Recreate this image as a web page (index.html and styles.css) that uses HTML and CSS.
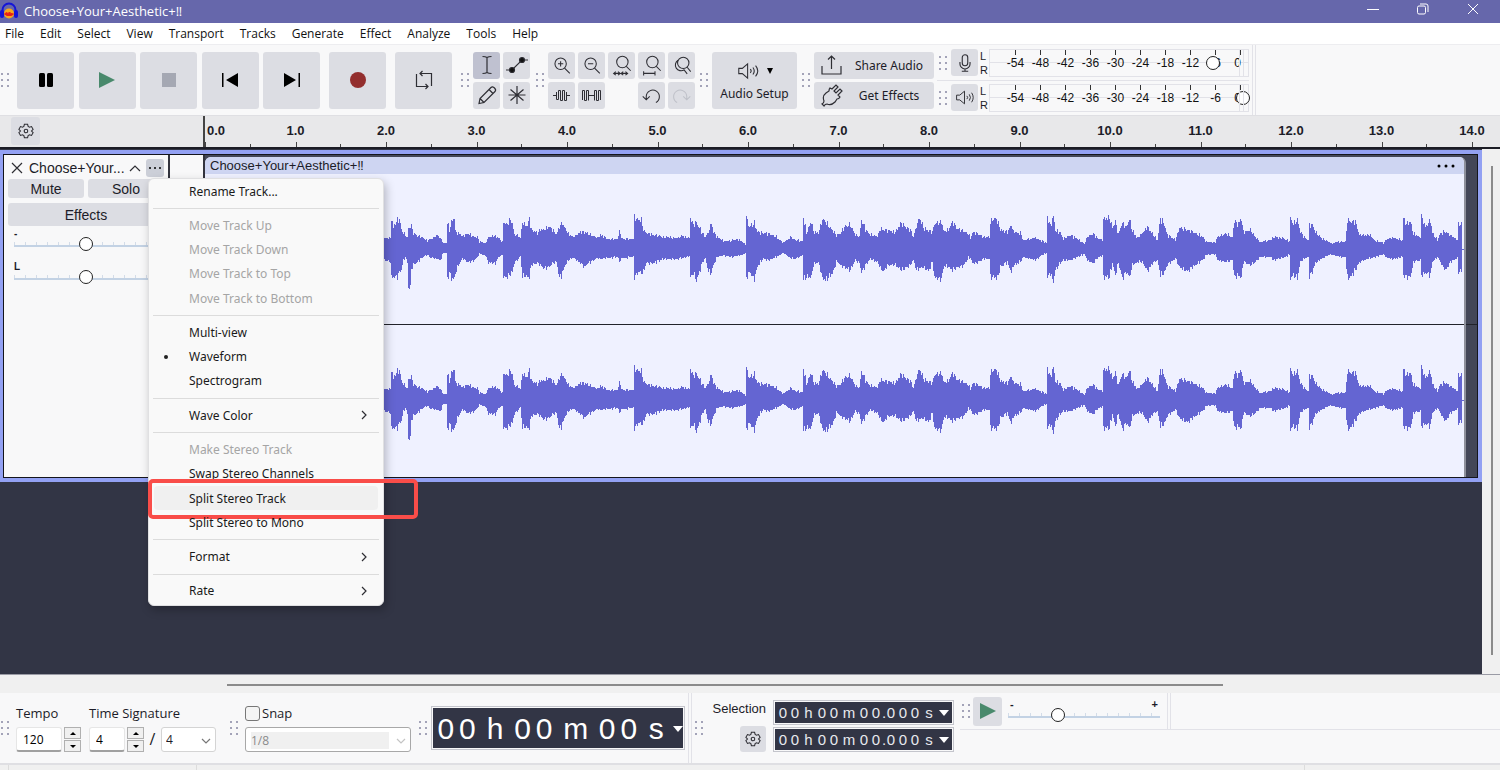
FILE: index.html
```html
<!DOCTYPE html>
<html lang="en">

<head>
    <meta charset="UTF-8">
    <title>Choose+Your+Aesthetic+‼</title>
    <link rel="stylesheet" href="styles.css">
</head>

<body>

    <header class="titlebar">
        <svg class="logo" width="18" height="18" viewBox="0 0 18 18">
            <path d="M2.500 11V8a6.500 6.500 0 0 1 13 0v3" fill="none" stroke="#1414d8" stroke-width="2" />
            <rect x="0" y="8" width="4" height="8" rx="2" fill="#1414d8" />
            <rect x="14" y="8" width="4" height="8" rx="2" fill="#1414d8" />
            <ellipse cx="9" cy="11.500" rx="5" ry="5" fill="#f7a81b" />
            <path d="M4.500 12l2-1.500 1.500 1 1.500-1.500 1.500 1.500 2.500.5-2 1.500H7z" fill="#e8201a" stroke="#e8201a" />
        </svg>
        <span class="title">Choose+Your+Aesthetic+‼</span>
        <div class="window-buttons">
            <button aria-label="Minimize"><svg width="12" height="12" viewBox="0 0 12 12"><path d="M0 6.500h12" /></svg></button>
            <button aria-label="Restore"><svg width="12" height="12" viewBox="0 0 12 12"><rect x="0.500" y="3" width="8" height="8" rx="1.500" /><path d="M3 1h6a2 2 0 0 1 2 2v6" /></svg></button>
            <button aria-label="Close"><svg width="12" height="12" viewBox="0 0 12 12"><path d="M1 1l10 10M11 1L1 11" /></svg></button>
        </div>
    </header>

    <nav class="menubar">
        <a href="#">File</a>
        <a href="#">Edit</a>
        <a href="#">Select</a>
        <a href="#">View</a>
        <a href="#">Transport</a>
        <a href="#">Tracks</a>
        <a href="#">Generate</a>
        <a href="#">Effect</a>
        <a href="#">Analyze</a>
        <a href="#">Tools</a>
        <a href="#">Help</a>
    </nav>

    <div class="toolbar">
        <span class="grip"></span>
        <div class="transport">
            <button class="big" aria-label="Pause"><svg width="24" height="24" viewBox="0 0 24 24"><rect x="5" y="5" width="6" height="14" rx="1.500" /><rect x="13" y="5" width="6" height="14" rx="1.500" /></svg></button>
            <button class="big" aria-label="Play"><svg width="24" height="24" viewBox="0 0 24 24"><path d="M4 4l16 8-16 8z" fill="#49896c" /></svg></button>
            <button class="big" aria-label="Stop"><svg width="24" height="24" viewBox="0 0 24 24"><rect x="5" y="5" width="14" height="14" fill="#a5a8b3" /></svg></button>
            <button class="big" aria-label="Skip to start"><svg width="24" height="24" viewBox="0 0 24 24"><path d="M4 5h1.500v14H4zM20 5v14L8 12z" /></svg></button>
            <button class="big" aria-label="Skip to end"><svg width="24" height="24" viewBox="0 0 24 24"><path d="M18.500 5H20v14h-1.500zM4 5v14l12-7z" /></svg></button>
        </div>
        <button class="big record" aria-label="Record"><svg width="24" height="24" viewBox="0 0 24 24"><circle cx="12" cy="12" r="8" fill="#932e2e" /></svg></button>
        <button class="big loop" aria-label="Loop"><svg class="line" width="24" height="24" viewBox="0 0 24 24"><path d="M8 18.500H4.500V6M16 5.500h3.500V18M8 5.500h8M10.500 3L8 5.500 10.500 8M8 18.500h8M13.500 16l2.500 2.500-2.500 2.500" /></svg></button>

        <span class="grip"></span>
        <div class="tools two">
            <button class="small active" aria-label="Selection tool"><svg class="line" width="24" height="24" viewBox="0 0 24 24"><path d="M7.500 3.500q3 0 4.500 1 1.500-1 4.500-1M7.500 20.500q3 0 4.500-1 1.500 1 4.500 1M12 4v16" /></svg></button>
            <button class="small" aria-label="Envelope tool"><svg class="line" width="24" height="24" viewBox="0 0 24 24"><path d="M1 17h6L17 7h6" /><circle cx="7" cy="17" r="2.500" fill="#111" /><circle cx="17" cy="7" r="2.500" fill="#111" /></svg></button>
            <button class="small" aria-label="Draw tool"><svg class="line" width="24" height="24" viewBox="0 0 24 24"><path d="M4 20.500l1-5L16 4.500q1.500-1.500 3.500.5t.5 3.500L9 19.500zM5 15.500l4 4M14 6.500l4 4" /></svg></button>
            <button class="small" aria-label="Multi tool"><svg class="line" width="24" height="24" viewBox="0 0 24 24"><path d="M12 3v18M3.500 12h17M5.500 6.500l13 11M18.500 6.500l-13 11" /></svg></button>
        </div>

        <span class="grip"></span>
        <div class="tools five">
            <button class="small" aria-label="Zoom in"><svg class="line" width="21" height="21" viewBox="0 0 24 24"><circle cx="11" cy="10" r="6.500" /><path d="M15.500 15l6 6M8 10h6M11 7v6" /></svg></button>
            <button class="small" aria-label="Zoom out"><svg class="line" width="21" height="21" viewBox="0 0 24 24"><circle cx="11" cy="10" r="6.500" /><path d="M15.500 15l6 6M8 10h6" /></svg></button>
            <button class="small" aria-label="Fit selection"><svg class="line" width="21" height="21" viewBox="0 0 24 24"><circle cx="13" cy="8" r="6.500" /><path d="M17.500 13l5 5M3 21h7M12 21h7M5.500 19L3 21l2.500 2M8 19l2.500 2L8 23M14 19l-2.500 2 2.500 2M16.500 19l2.500 2-2.500 2" /></svg></button>
            <button class="small" aria-label="Fit project"><svg class="line" width="21" height="21" viewBox="0 0 24 24"><circle cx="13" cy="8" r="6.500" /><path d="M17.500 13l5 5M3 21h13M3 18.500v5M16 18.500v5" /></svg></button>
            <button class="small" aria-label="Zoom toggle"><svg class="line" width="21" height="21" viewBox="0 0 24 24"><circle cx="14" cy="9" r="6.500" /><path d="M18.500 14l4 5M8 6a6 6 0 1 0 7 11M14.500 16.500l4 5" /></svg></button>
            <button class="small" aria-label="Trim audio"><svg class="fine" width="21" height="21" viewBox="0 0 21 21"><path d="M2 10.500h3.500M5.500 7v7.500h2v-9h2v10h2v-10h2v10h2V7M15.500 10.500H19" /></svg></button>
            <button class="small" aria-label="Silence audio"><svg class="fine" width="21" height="21" viewBox="0 0 21 21"><path d="M1.500 15V5.500h2v10h2v-10h2v10M7.500 10.500h6M13.500 15.500v-10h2v10h2v-10h2V15" /></svg></button>
            <span></span>
            <button class="small" aria-label="Undo"><svg class="line" width="21" height="21" viewBox="0 0 24 24"><path d="M6 16v-3a7.500 7.500 0 1 1 11 7M2 13l4 4 4-4" /></svg></button>
            <button class="small" aria-label="Redo" disabled><svg class="line faded" width="21" height="21" viewBox="0 0 24 24"><path d="M18 16v-3a7.500 7.500 0 1 0-11 7M22 13l-4 4-4-4" /></svg></button>
        </div>

        <span class="grip"></span>
        <button class="audio-setup">
            <span class="audio-icons">
                <svg class="line" width="23" height="18" viewBox="0 0 26 20"><path d="M2 7h4l6-5v16l-6-5H2zM15 8q2 2 0 4M18 6q3 4 0 8M21 4q5 6 0 12" /></svg>
                <svg width="6" height="6" viewBox="0 0 6 6"><path d="M0 0h6L3 6z" /></svg>
            </span>
            Audio Setup
        </button>

        <span class="grip"></span>
        <div class="share">
            <button><svg class="line" width="24" height="24" viewBox="0 0 24 24"><path d="M2 13v8h19v-8M11.500 16V3M8 6.500L11.500 3 15 6.500" /></svg><span>Share Audio</span></button>
            <button><svg class="line" width="24" height="24" viewBox="0 0 24 24"><path d="M2 21q2-1 2-3-2-5 2-8l3-2q0-2 1-3l2 1 4-4 2 2-4 4 2 2 4-4 2 2-4 4 2 2q-1 2-3 2l-2 3q-4 4-8 2-2 0-3 2z" /></svg><span>Get Effects</span></button>
        </div>

        <div class="meters">
            <div class="meter-row">
                <span class="grip"></span>
                <button class="small" aria-label="Record meter"><svg class="line" width="22" height="22" viewBox="0 0 24 24"><rect x="9" y="3" width="6" height="12" rx="3" /><path d="M6.500 11v2a5.500 5.500 0 0 0 11 0v-2M12 18v3M8.500 21h7" /></svg></button>
                <div class="channels"><span>L</span><span>R</span></div>
                <div class="meter">
                    <div class="scale"><span>-54</span><span>-48</span><span>-42</span><span>-36</span><span>-30</span><span>-24</span><span>-18</span><span>-12</span><span>-6</span><span>0</span></div>
                    <input class="level" type="range" min="0" max="100" value="88" aria-label="Recording level">
                </div>
            </div>
            <div class="meter-row">
                <span class="grip"></span>
                <button class="small" aria-label="Playback meter"><svg class="line" width="21" height="19" viewBox="0 0 26 24"><path d="M3 9h4l6-5v16l-6-5H3zM16 10q2 2 0 4M19 8q3 4 0 8M22 6q4 6 0 12" /></svg></button>
                <div class="channels"><span>L</span><span>R</span></div>
                <div class="meter">
                    <div class="scale"><span>-54</span><span>-48</span><span>-42</span><span>-36</span><span>-30</span><span>-24</span><span>-18</span><span>-12</span><span>-6</span><span>0</span></div>
                    <input class="level" type="range" min="0" max="100" value="100" aria-label="Playback level">
                </div>
            </div>
        </div>
        <span class="divider"></span>
    </div>

    <div class="ruler">
        <div class="ruler-left">
            <button class="gear" aria-label="Timeline options"><svg class="line" width="16" height="16" viewBox="0 0 18 18"><path d="M7.200 1.500h3.600l.6 2.400 1.500.8 2.300-.7 1.800 3.100L15.200 9l1.800 1.900-1.800 3.100-2.300-.7-1.500.8-.6 2.400H7.200l-.6-2.400-1.500-.8-2.300.7L1 10.900 2.800 9 1 7.100 2.800 4l2.300.7 1.500-.8z" /><circle cx="9" cy="9" r="2" /></svg></button>
        </div>
        <div class="ticks">
            <span class="tick first"><b>0.0</b></span>
            <span class="tick"><b>1.0</b></span>
            <span class="tick"><b>2.0</b></span>
            <span class="tick"><b>3.0</b></span>
            <span class="tick"><b>4.0</b></span>
            <span class="tick"><b>5.0</b></span>
            <span class="tick"><b>6.0</b></span>
            <span class="tick"><b>7.0</b></span>
            <span class="tick"><b>8.0</b></span>
            <span class="tick"><b>9.0</b></span>
            <span class="tick"><b>10.0</b></span>
            <span class="tick"><b>11.0</b></span>
            <span class="tick"><b>12.0</b></span>
            <span class="tick"><b>13.0</b></span>
            <span class="tick last"><b>14.0</b></span>
        </div>
    </div>

    <main class="workspace">
        <div class="tracks">
            <section class="track">
                <div class="track-inner">
                    <div class="panel">
                        <div class="panel-head">
                            <button class="plain" aria-label="Close track"><svg class="line" width="12" height="12" viewBox="0 0 12 12"><path d="M1 1l10 10M11 1L1 11" /></svg></button>
                            <span class="track-name">Choose+Your...</span>
                            <button class="plain" aria-label="Collapse"><svg class="line" width="12" height="12" viewBox="0 0 12 12"><path d="M1 9l5-5 5 5" /></svg></button>
                            <button class="more" aria-label="Track menu"><svg width="14" height="4" viewBox="0 0 14 4"><circle cx="2" cy="2" r="1" /><circle cx="7" cy="2" r="1" /><circle cx="12" cy="2" r="1" /></svg></button>
                        </div>
                        <div class="mute-solo">
                            <button>Mute</button>
                            <button>Solo</button>
                        </div>
                        <button class="effects">Effects</button>
                        <div class="knob">
                            <label for="gain">-</label>
                            <input class="slider" id="gain" type="range" value="50">
                        </div>
                        <div class="knob">
                            <label for="pan">L</label>
                            <input class="slider" id="pan" type="range" value="50">
                        </div>

                        <ul class="menu">
                            <li><button>Rename Track...</button></li>
                            <li class="sep"></li>
                            <li><button disabled>Move Track Up</button></li>
                            <li><button disabled>Move Track Down</button></li>
                            <li><button disabled>Move Track to Top</button></li>
                            <li><button disabled>Move Track to Bottom</button></li>
                            <li class="sep"></li>
                            <li><button>Multi-view</button></li>
                            <li class="checked"><button>Waveform</button></li>
                            <li><button>Spectrogram</button></li>
                            <li class="sep"></li>
                            <li><button>Wave Color <svg class="line" width="8" height="10" viewBox="0 0 8 10"><path d="M2 1l4 4-4 4" /></svg></button></li>
                            <li class="sep"></li>
                            <li><button disabled>Make Stereo Track</button></li>
                            <li><button>Swap Stereo Channels</button></li>
                            <li class="hover"><button>Split Stereo Track</button><span class="marker"></span></li>
                            <li><button>Split Stereo to Mono</button></li>
                            <li class="sep"></li>
                            <li><button>Format <svg class="line" width="8" height="10" viewBox="0 0 8 10"><path d="M2 1l4 4-4 4" /></svg></button></li>
                            <li class="sep"></li>
                            <li><button>Rate <svg class="line" width="8" height="10" viewBox="0 0 8 10"><path d="M2 1l4 4-4 4" /></svg></button></li>
                        </ul>
                    </div>
                    <div class="vruler"></div>
                    <div class="clip-area">
                        <div class="clip">
                            <div class="clip-head">
                                <span>Choose+Your+Aesthetic+‼</span>
                                <svg width="18" height="4" viewBox="0 0 18 4"><circle cx="2" cy="2" r="1.500" /><circle cx="9" cy="2" r="1.500" /><circle cx="16" cy="2" r="1.500" /></svg>
                            </div>
                            <div class="channel"><svg class="wave" viewBox="0 0 1259 150" preserveAspectRatio="none"></svg></div>
                            <div class="channel"><svg class="wave" viewBox="0 0 1259 150" preserveAspectRatio="none"></svg></div>
                        </div>
                    </div>
                </div>
            </section>
        </div>
        <div class="vscroll"><span></span></div>
    </main>
    <div class="hscroll"><span></span></div>

    <footer class="bottombar">
        <span class="grip"></span>
        <div class="field tempo">
            <label for="tempo">Tempo</label>
            <div class="field-row">
                <input id="tempo" type="text" value="120">
                <div class="spin"><button aria-label="Tempo up"><svg width="6" height="3" viewBox="0 0 6 3"><path d="M0 3l3-3 3 3z" /></svg></button><button aria-label="Tempo down"><svg width="6" height="3" viewBox="0 0 6 3"><path d="M0 0l3 3 3-3z" /></svg></button></div>
            </div>
        </div>
        <div class="field signature">
            <label for="upper">Time Signature</label>
            <div class="field-row">
                <input id="upper" type="text" value="4">
                <div class="spin"><button aria-label="Beats up"><svg width="6" height="3" viewBox="0 0 6 3"><path d="M0 3l3-3 3 3z" /></svg></button><button aria-label="Beats down"><svg width="6" height="3" viewBox="0 0 6 3"><path d="M0 0l3 3 3-3z" /></svg></button></div>
                <span class="slash">/</span>
                <div class="select">
                    <select aria-label="Lower time signature"><option>4</option></select>
                    <svg class="line" width="10" height="6" viewBox="0 0 10 6"><path d="M1 1l4 4 4-4" /></svg>
                </div>
            </div>
        </div>

        <span class="grip"></span>
        <div class="field snap">
            <label><input type="checkbox">Snap</label>
            <div class="select off">
                <select aria-label="Snap to" disabled><option>1/8</option></select>
                <svg class="line" width="10" height="6" viewBox="0 0 10 6"><path d="M1 1l4 4 4-4" /></svg>
            </div>
        </div>

        <span class="grip"></span>
        <div class="time large">
            <i>0</i><i>0</i><i class="h">h</i><i>0</i><i>0</i><i class="m">m</i><i>0</i><i>0</i><i class="s">s</i>
            <button aria-label="Time format"><svg width="10" height="6" viewBox="0 0 10 6"><path d="M0 0h10L5 6z" /></svg></button>
        </div>
        <span class="divider"></span>

        <span class="grip"></span>
        <div class="selection">
            <span>Selection</span>
            <button class="gear" aria-label="Selection options"><svg class="line" width="16" height="16" viewBox="0 0 18 18"><path d="M7.200 1.500h3.600l.6 2.400 1.500.8 2.300-.7 1.800 3.100L15.200 9l1.800 1.900-1.800 3.100-2.300-.7-1.500.8-.6 2.400H7.200l-.6-2.400-1.500-.8-2.300.7L1 10.900 2.800 9 1 7.100 2.800 4l2.300.7 1.500-.8z" /><circle cx="9" cy="9" r="2" /></svg></button>
        </div>
        <div class="times">
            <div class="time">
                <i>0</i><i>0</i><i class="h">h</i><i>0</i><i>0</i><i class="m">m</i><i>0</i><i>0</i><i class="dot">.</i><i>0</i><i>0</i><i>0</i><i class="s">s</i>
                <button aria-label="Start format"><svg width="10" height="6" viewBox="0 0 10 6"><path d="M0 0h10L5 6z" /></svg></button>
            </div>
            <div class="time">
                <i>0</i><i>0</i><i class="h">h</i><i>0</i><i>0</i><i class="m">m</i><i>0</i><i>0</i><i class="dot">.</i><i>0</i><i>0</i><i>0</i><i class="s">s</i>
                <button aria-label="End format"><svg width="10" height="6" viewBox="0 0 10 6"><path d="M0 0h10L5 6z" /></svg></button>
            </div>
        </div>

        <div class="speed">
            <span class="grip"></span>
            <button class="speed-play" aria-label="Play at speed"><svg width="24" height="24" viewBox="0 0 24 24"><path d="M4 4l16 8-16 8z" fill="#49896c" /></svg></button>
            <div class="speed-slider">
                <div class="ends"><span>-</span><span>+</span></div>
                <input class="slider" type="range" min="0" max="100" value="31" aria-label="Playback speed">
            </div>
            <span class="divider"></span>
        </div>
    </footer>
    <div class="statusbar"><span></span><span></span><span></span></div>

    <script src="script.js"></script>
</body>

</html>
```

FILE: styles.css
```css
* {
    box-sizing: border-box;
}

body {
    margin: 0;
    height: 100vh;
    display: flex;
    flex-direction: column;
    overflow: hidden;
    background: #f8f8f9;
    color: #1c1c28;
    font-family: "Open Sans", "Noto Sans", sans-serif;
    font-size: 12px;
}

button {
    display: flex;
    align-items: center;
    justify-content: center;
    padding: 0;
    border: none;
    border-radius: 3px;
    background: #dcdde3;
    color: inherit;
    font: inherit;
}

svg {
    flex: none;
}

.line,
.fine {
    fill: none;
    stroke: #2e2e34;
    stroke-width: 1.2px;
}

.fine {
    stroke-width: 1px;
}

.faded {
    stroke: #bfc1c9;
}

/* title and menu */
.titlebar {
    flex: none;
    display: flex;
    align-items: center;
    height: 23px;
    padding-bottom: 2px;
    background: #6667ab;
    color: #fff;
}

.title {
    flex: 1;
    margin-left: 6px;
    font-size: 13px;
}

.window-buttons {
    display: flex;
    align-self: flex-start;
    margin-right: 2px;
}

.window-buttons button {
    width: 50px;
    height: 18px;
    background: none;
}

.window-buttons svg {
    fill: none;
    stroke: #fff;
}

.menubar {
    flex: none;
    display: flex;
    align-items: center;
    gap: 16px;
    height: 21px;
    padding-left: 5px;
    background: #fff;
}

.menubar a {
    color: #111;
    text-decoration: none;
}

/* top toolbar */
.toolbar {
    flex: none;
    display: flex;
    align-items: center;
    height: 72px;
    border-top: 1px solid #ededf0;
    border-bottom: 1px solid #dfdfe3;
}

.grip {
    flex: none;
    width: 8px;
    height: 14px;
    margin: 0 4px 0 5px;
    background: conic-gradient(#a3a3b8 0 0) 0 0 / 2px 2px no-repeat,
        conic-gradient(#a3a3b8 0 0) 100% 0 / 2px 2px no-repeat,
        conic-gradient(#a3a3b8 0 0) 0 50% / 2px 2px no-repeat,
        conic-gradient(#a3a3b8 0 0) 100% 50% / 2px 2px no-repeat,
        conic-gradient(#a3a3b8 0 0) 0 100% / 2px 2px no-repeat,
        conic-gradient(#a3a3b8 0 0) 100% 100% / 2px 2px no-repeat;
}

.toolbar > .grip:first-child,
.bottombar > .grip:first-child {
    margin-left: 1px;
    margin-right: 7px;
}

.toolbar > .grip:first-child {
    margin-right: 8px;
}

.transport {
    display: flex;
    justify-content: space-between;
    width: 303px;
}

.big {
    width: 57px;
    height: 57px;
}

.record {
    margin-left: 9px;
}

.loop {
    margin: 0 4px 0 9px;
}

.tools {
    display: grid;
    gap: 3px;
}

.two {
    grid-template-columns: repeat(2, 27px);
    margin-right: 1px;
}

.five {
    grid-template-columns: repeat(5, 27px);
}

.small {
    width: 27px;
    height: 27px;
}

.active {
    background: #bfc1d0;
}

.audio-setup {
    flex-direction: column;
    gap: 5px;
    width: 85px;
    height: 57px;
    padding-top: 3px;
    font-family: "Noto Sans", sans-serif;
}

.audio-icons {
    display: flex;
    align-items: center;
    gap: 7px;
}

.share {
    display: grid;
    gap: 3px;
    font-family: "Noto Sans", sans-serif;
}

.share button {
    justify-content: flex-start;
    width: 120px;
    height: 27px;
    padding-left: 6px;
}

.share span {
    flex: 1;
    text-align: center;
}

.meters {
    align-self: stretch;
    margin-left: 3px;
}

.meter-row {
    display: flex;
    align-items: center;
    height: 33px;
}

.meter-row:first-child {
    height: 36px;
    border-bottom: 1px solid #e2e2e8;
}

.meter-row .grip {
    margin-left: 2px;
}

.channels {
    display: flex;
    flex-direction: column;
    width: 9px;
    margin-left: 2px;
    font: 11px/14px "Liberation Sans", sans-serif;
}

.meter {
    position: relative;
    width: 260px;
    height: 28px;
    border: 1px solid #e2e2e8;
    background: linear-gradient(#e2e2e8, #e2e2e8) 100% 50% / 100% 1px no-repeat;
}

.meter::after {
    content: "";
    position: absolute;
    top: 0;
    bottom: 0;
    right: 4px;
    width: 3px;
    border: 1px solid #e2e2e8;
    border-width: 0 1px;
}

.scale {
    display: grid;
    grid-template-columns: repeat(10, 25px);
    padding-left: 13px;
    font: 12px/26px "Liberation Sans", sans-serif;
    text-align: center;
    color: #111;
}

.scale span {
    background: linear-gradient(#333, #333) 50% 0 / 1px 5px no-repeat;
}

.scale span:last-child {
    padding-right: 6px;
}

.level {
    position: absolute;
    left: 0;
    top: 0;
    width: 260px;
    height: 26px;
    margin: 0;
    appearance: none;
    background: none;
}

.level::-webkit-slider-thumb,
.slider::-webkit-slider-thumb {
    appearance: none;
    width: 14px;
    height: 14px;
    border: 1px solid #222;
    border-radius: 50%;
    background: #fff;
}

.divider {
    align-self: stretch;
    width: 4px;
    margin-left: 3px;
    border: 1px solid #e2e2e8;
    border-width: 0 1px;
}

/* timeline */
.ruler {
    flex: none;
    display: flex;
    height: 33px;
    background: #e8e8ea;
    border-bottom: 2px solid #1b1c25;
}

.ruler-left {
    width: 205px;
    padding: 1px 0 0 11px;
    border-right: 2px solid #444;
}

.gear {
    width: 29px;
    height: 28px;
}

.ticks {
    flex: 1;
    display: grid;
    grid-template-columns: repeat(14, 1fr) 28px;
    overflow: hidden;
}

.tick {
    background: linear-gradient(#444, #444) 0 100% / 1px 5px no-repeat,
        linear-gradient(#444, #444) 50% 100% / 1px 3px no-repeat;
}

.last {
    background: linear-gradient(#444, #444) 0 100% / 1px 5px no-repeat;
}

.tick b {
    display: block;
    width: 40px;
    margin-left: -20px;
    text-align: center;
    font: bold 13px/29px "Liberation Sans", sans-serif;
}

.first b {
    margin-left: 2px;
    text-align: left;
}

/* tracks */
.workspace {
    flex: 1;
    display: flex;
    min-height: 0;
}

.tracks {
    flex: 1;
    padding-top: 1px;
    background: #323545;
}

.track {
    border: 4px solid #93a1f3;
    border-left-width: 3px;
}

.track-inner {
    display: flex;
    border: 1px solid #14151c;
    background: #f8f8f9;
    font-family: "Liberation Sans", sans-serif;
}

.panel {
    position: relative;
    width: 164px;
    padding: 4px 4px 0;
    font-size: 14px;
}

.panel-head {
    display: flex;
    align-items: center;
    height: 18px;
    padding-left: 3px;
}

.plain {
    width: 12px;
    background: none;
}

.track-name {
    flex: 1;
    margin-left: 6px;
}

.more {
    width: 18px;
    height: 18px;
    margin-left: 5px;
    background: #cccfd8;
}

.mute-solo {
    display: flex;
    gap: 4px;
    margin: 2px 0 5px;
}

.mute-solo button {
    flex: 1;
    height: 19px;
}

.effects {
    width: 100%;
    height: 23px;
}

.knob {
    height: 33px;
    padding: 4px 7px 0 6px;
}

.knob label {
    display: block;
    height: 7px;
    font: bold 10px/7px "Liberation Sans", sans-serif;
}

.slider {
    display: block;
    width: 100%;
    height: 14px;
    margin: 0;
    appearance: none;
    background: linear-gradient(#c3d2e4, #c3d2e4) 0 8px / 100% 2px no-repeat,
        repeating-linear-gradient(90deg, #d3dce8 0 1px, transparent 1px 11px) 0 5px / 100% 4px no-repeat;
}

.vruler {
    width: 37px;
    border: 2px solid #33343e;
    border-width: 0 2px;
}

.clip-area {
    flex: 1;
    padding: 2px 11px 0 0;
    background: linear-gradient(#22232b, #22232b) 0 169px / 100% 1px no-repeat #434657;
}

.clip {
    border-right: 2px solid #8e909b;
    border-radius: 6px 6px 0 0;
    background: #eff1ff;
    overflow: hidden;
}

.clip-head {
    display: flex;
    align-items: center;
    justify-content: space-between;
    height: 17px;
    padding: 0 9px 0 5px;
    background: #ced5f2;
    font-size: 13px;
}

.channel {
    height: 151px;
    border-bottom: 1px solid #22232b;
}

.channel:last-child {
    height: 152px;
    border: none;
}

.wave {
    display: block;
    width: 100%;
    height: 150px;
}

.wave path {
    fill: #6465d2;
}

/* track drop-down */
.menu {
    position: absolute;
    z-index: 5;
    left: 144px;
    top: 23px;
    display: flex;
    flex-direction: column;
    width: 236px;
    height: 428px;
    margin: 0;
    padding: 0 0 2px;
    border: 1px solid #e0e0e2;
    border-radius: 6px;
    background: #f9f9f9;
    box-shadow: 2px 4px 10px rgba(0, 0, 0, 0.25);
    list-style: none;
    font-family: "Noto Sans", sans-serif;
    font-size: 12px;
    color: #1a1a1a;
}

.menu li {
    position: relative;
    flex: 1;
    margin: 0 5px;
}

.menu li button {
    justify-content: space-between;
    width: 100%;
    height: 100%;
    padding: 0 10px 0 35px;
    background: none;
}

.menu button:disabled {
    color: #a5a5a5;
}

.menu .sep {
    flex: none;
    height: 1px;
    margin: 5px 4px 4px;
    background: #dcdcdc;
}

.menu .hover button {
    border-radius: 4px;
    background: #f0f0f0;
}

.menu .checked::before {
    content: "";
    position: absolute;
    left: 10px;
    top: 10px;
    width: 4px;
    height: 4px;
    border-radius: 50%;
    background: #222;
}

.marker {
    position: absolute;
    left: -6px;
    top: -7px;
    width: 270px;
    height: 40px;
    border: 4px solid #f94d49;
    border-radius: 5px;
}

/* scrollbars */
.vscroll {
    width: 18px;
    padding: 17px 0 19px 9px;
    background: #f0f0f0;
}

.vscroll span {
    display: block;
    width: 2px;
    height: 100%;
    background: #8b8b8b;
}

.hscroll {
    flex: none;
    height: 19px;
    padding: 9px 277px 0 227px;
    background: #f0f0f0;
    border-top: 1px solid #9a9ba5;
}

.hscroll span {
    display: block;
    height: 2px;
    background: #8b8b8b;
}

/* bottom toolbar */
.bottombar {
    flex: none;
    display: flex;
    align-items: center;
    height: 72px;
    border-bottom: 2px solid #dfdfe3;
    font-size: 13px;
}

.field {
    display: flex;
    flex-direction: column;
    gap: 5px;
}

.field label {
    display: flex;
    align-items: center;
    height: 18px;
}

.field-row {
    display: flex;
}

.field input[type="text"] {
    width: 46px;
    height: 25px;
    padding: 0 6px;
    border: 1px solid #e6e6e6;
    border-bottom: 2px solid #a0a0a0;
    border-radius: 3px;
    font: 12px "Open Sans", sans-serif;
}

.signature {
    margin-left: 8px;
}

.signature input[type="text"] {
    width: 36px;
}

.spin {
    display: flex;
    flex-direction: column;
    gap: 1px;
    margin-left: 2px;
}

.spin button {
    width: 17px;
    height: 12px;
    border: 1px solid #b0b0b0;
    border-radius: 0;
    background: #f0f0f0;
}

.slash {
    width: 17px;
    text-align: center;
    font-size: 16px;
    line-height: 24px;
}

.select {
    position: relative;
    width: 55px;
    height: 25px;
    border: 1px solid #d4d4d4;
    border-radius: 3px;
    background: #fff;
}

.select select {
    width: 100%;
    height: 100%;
    padding: 0 4px;
    border: none;
    appearance: none;
    background: none;
    font: 12px "Open Sans", sans-serif;
    color: #1c1c28;
}

.select svg {
    position: absolute;
    right: 4px;
    top: 10px;
    pointer-events: none;
    stroke: #777;
}

.field + .grip {
    margin-left: 14px;
    margin-right: 7px;
}

.snap label {
    gap: 2px;
}

.snap input {
    appearance: none;
    width: 15px;
    height: 15px;
    margin: 0;
    border: 1px solid #777;
    border-radius: 3px;
    background: #f4f4f4;
}

.select.off {
    width: 166px;
    border: 1px solid #a8a8a8;
    padding: 3px 21px 3px 5px;
}

.select.off select {
    padding: 0;
    background: #f0f0f0;
    color: #8b8b8b;
    opacity: 1;
}

.select.off svg {
    stroke: #c4c4c4;
}

.snap + .grip {
    margin-left: 8px;
    margin-right: 4px;
}

.time {
    display: flex;
    align-items: center;
    width: 181px;
    height: 25px;
    padding-left: 2px;
    border: 2px solid #c4c5cc;
    outline: 1px solid #f8f8f9;
    outline-offset: -2px;
    background: #323545;
    color: #e8e9ee;
    font: 15px "Liberation Sans", sans-serif;
}

.time i {
    width: 12px;
    text-align: center;
    font-style: normal;
}

.time .h {
    width: 15px;
}

.time .m {
    width: 18px;
}

.time .s {
    width: 16px;
}

.time .dot {
    width: 3px;
}

.time button {
    margin-left: 2px;
    background: none;
    fill: #fff;
}

.large {
    width: 254px;
    height: 44px;
    padding-top: 2px;
    overflow: hidden;
    color: #fff;
    font-size: 30px;
}

.large i {
    width: 22px;
}

.large .h,
.large .s {
    width: 34px;
}

.large .m {
    width: 42px;
}

.large button {
    margin-left: 0;
}

.bottombar > .divider + .grip {
    margin-left: 3px;
    margin-right: 7px;
}

.selection {
    display: flex;
    flex-direction: column;
    align-items: flex-end;
    gap: 10px;
    width: 56px;
    margin-bottom: 4px;
    font-family: "Liberation Sans", sans-serif;
}

.selection .gear {
    width: 26px;
    height: 26px;
}

.times {
    display: grid;
    gap: 2px;
    margin: 0 0 4px 7px;
}

.speed {
    flex: 1;
    align-self: flex-start;
    display: flex;
    align-items: center;
    height: 37px;
    margin-left: 6px;
    border-bottom: 1px solid #e2e2e8;
}

.speed .grip {
    margin: 0 3px 0 2px;
}

.speed-play {
    width: 29px;
    height: 29px;
}

.speed-slider {
    width: 152px;
    margin: 0 4px 0 6px;
}

.ends {
    display: flex;
    justify-content: space-between;
    padding: 0 2px;
    font: bold 11px/8px "Liberation Sans", sans-serif;
}

.statusbar {
    flex: none;
    display: flex;
    height: 5px;
    background: #f0f0f0;
}

.statusbar span {
    width: 9px;
    border-right: 1px solid #dcdcdc;
}

.statusbar span:nth-child(2) {
    width: 188px;
}

.statusbar span:nth-child(3) {
    flex: 1;
    margin-right: 195px;
}
```

FILE: script.js
```javascript
// peaks of the clip: x, height above and depth below the centre line
const peaks = [
    [384, 11, 11], [390, 11, 13], [391, 31, 29], [393, 21, 27], [394, 24, 28], [397, 29, 28], [399, 29, 23],
    [401, 20, 21], [403, 16, 11], [405, 14, 8], [407, 11, 13], [408, 21, 39], [409, 21, 39], [410, 23, 39], [411, 23, 20],
    [413, 16, 16], [417, 13, 13], [422, 12, 8], [427, 8, 6], [430, 10, 9], [433, 11, 9], [437, 14, 10],
    [440, 11, 11], [443, 6, 4], [446, 6, 4], [447, 26, 30], [449, 19, 23], [451, 27, 29], [454, 32, 30],
    [455, 17, 24], [458, 16, 16], [462, 13, 9], [467, 15, 13], [473, 12, 12], [477, 12, 8], [479, 7, 5],
    [485, 6, 6], [488, 12, 14], [495, 13, 14], [498, 11, 8], [502, 7, 6], [503, 27, 28], [507, 24, 28],
    [509, 29, 26], [512, 26, 23], [514, 14, 14], [517, 14, 11], [520, 11, 7], [522, 27, 28], [524, 24, 26],
    [527, 23, 28], [529, 31, 28], [531, 19, 16], [537, 16, 14], [540, 20, 16], [543, 19, 19], [549, 22, 18],
    [552, 19, 14], [556, 15, 13], [559, 22, 29], [562, 26, 24], [564, 22, 18], [568, 15, 11], [573, 12, 9],
    [580, 17, 14], [584, 17, 18], [588, 15, 14], [593, 13, 11], [597, 11, 9], [600, 14, 10], [607, 10, 9],
    [617, 10, 8], [619, 17, 12], [622, 10, 9], [633, 10, 8], [634, 31, 28], [638, 29, 23], [641, 29, 24],
    [643, 19, 23], [646, 16, 14], [653, 14, 14], [663, 12, 10], [677, 11, 10], [682, 13, 9], [689, 11, 7],
    [690, 31, 29], [693, 24, 24], [696, 27, 31], [698, 23, 26], [702, 16, 14], [705, 12, 9], [708, 17, 23],
    [711, 26, 24], [713, 17, 16], [717, 12, 8], [723, 8, 6], [730, 8, 8], [737, 10, 7], [742, 7, 6],
    [745, 5, 4], [746, 31, 29], [749, 22, 23], [754, 26, 30], [757, 17, 18], [762, 16, 10], [770, 15, 11],
    [777, 11, 7], [783, 6, 4], [790, 12, 9], [795, 9, 10], [802, 8, 6], [803, 32, 30], [806, 16, 28],
    [811, 28, 28], [813, 17, 16], [818, 16, 13], [822, 29, 29], [825, 28, 31], [828, 23, 28], [833, 18, 23],
    [836, 13, 12], [840, 16, 16], [845, 23, 19], [850, 24, 21], [855, 14, 11], [859, 12, 14], [861, 29, 24],
    [865, 19, 16], [870, 14, 10], [877, 13, 13], [880, 20, 19], [883, 19, 22], [888, 18, 16], [895, 17, 16],
    [901, 26, 21], [905, 22, 19], [910, 19, 16], [913, 12, 11], [916, 23, 21], [919, 31, 19], [923, 21, 18],
    [928, 18, 22], [932, 17, 13], [934, 25, 29], [941, 27, 30], [944, 17, 16], [948, 19, 18], [952, 27, 21],
    [957, 20, 18], [963, 18, 17], [968, 15, 8], [970, 10, 9], [972, 16, 14], [977, 16, 14], [982, 12, 10],
    [989, 12, 10], [990, 27, 28], [994, 31, 28], [997, 28, 29], [1000, 19, 18], [1007, 17, 13], [1011, 24, 24],
    [1013, 17, 16], [1020, 16, 13], [1023, 9, 8], [1035, 11, 11], [1042, 8, 6], [1046, 6, 4], [1047, 32, 28],
    [1050, 23, 24], [1053, 33, 33], [1055, 19, 21], [1060, 16, 14], [1063, 10, 11], [1070, 14, 11], [1077, 10, 8],
    [1084, 5, 5], [1087, 12, 11], [1093, 15, 14], [1098, 10, 8], [1102, 9, 6], [1103, 30, 28], [1109, 31, 28],
    [1112, 21, 14], [1115, 27, 26], [1118, 15, 14], [1122, 26, 29], [1126, 22, 23], [1129, 30, 28], [1132, 18, 16],
    [1137, 11, 13], [1142, 16, 13], [1147, 22, 22], [1153, 14, 13], [1157, 9, 11], [1160, 31, 26], [1164, 24, 23],
    [1167, 14, 16], [1175, 9, 9], [1179, 21, 18], [1187, 19, 22], [1195, 16, 16], [1202, 12, 11], [1206, 7, 6],
    [1215, 7, 5], [1217, 12, 11], [1225, 15, 13], [1232, 12, 11], [1234, 29, 28], [1237, 24, 26], [1241, 30, 28],
    [1243, 17, 13], [1250, 19, 16], [1255, 12, 13], [1260, 7, 8], [1270, 9, 8], [1273, 12, 11], [1282, 11, 9],
    [1289, 8, 6], [1290, 31, 29], [1293, 25, 26], [1297, 29, 29], [1300, 17, 13], [1305, 11, 9], [1308, 9, 8],
    [1309, 24, 27], [1312, 24, 23], [1315, 17, 14], [1322, 10, 9], [1330, 6, 5], [1340, 7, 8], [1345, 7, 8],
    [1347, 29, 29], [1350, 27, 28], [1355, 27, 21], [1359, 14, 13], [1369, 14, 9], [1375, 8, 8], [1383, 6, 5],
    [1387, 10, 9], [1393, 11, 10], [1402, 9, 8], [1403, 31, 26], [1406, 25, 28], [1410, 27, 28], [1413, 15, 13],
    [1420, 12, 11], [1421, 32, 26], [1425, 22, 24], [1430, 29, 26], [1432, 16, 13], [1437, 9, 8], [1440, 16, 13],
    [1445, 17, 22], [1450, 14, 13], [1457, 9, 9], [1458, 24, 23], [1462, 26, 21]
];

const clipLeft = 205;
const middle = 75;

// small repeatable jitter so the edge looks like samples
function jitter(x, size) {
    return Math.round(Math.sin(x * 12.9898) * Math.cos(x * 4.137) * size);
}

function wavePath() {
    let d = "";
    for (let i = 0; i < peaks.length - 1; i++) {
        const [x1, up1, down1] = peaks[i];
        const [x2, up2, down2] = peaks[i + 1];
        for (let x = x1; x < x2; x++) {
            const t = (x - x1) / (x2 - x1);
            const up = Math.round(up1 + (up2 - up1) * t) + jitter(x, up1 / 8);
            const down = Math.round(down1 + (down2 - down1) * t) + jitter(x + 7, down1 / 8);
            d += `M${x - clipLeft} ${middle - up}h1v${up + down}h-1z`;
        }
    }
    // silence up to the end of the clip
    return d + `M${1462 - clipLeft} ${middle}h3v1h-3z`;
}

document.querySelectorAll(".wave").forEach(svg => {
    const path = document.createElementNS("http://www.w3.org/2000/svg", "path");
    path.setAttribute("d", wavePath());
    path.setAttribute("shape-rendering", "crispEdges");
    svg.appendChild(path);
});
```
